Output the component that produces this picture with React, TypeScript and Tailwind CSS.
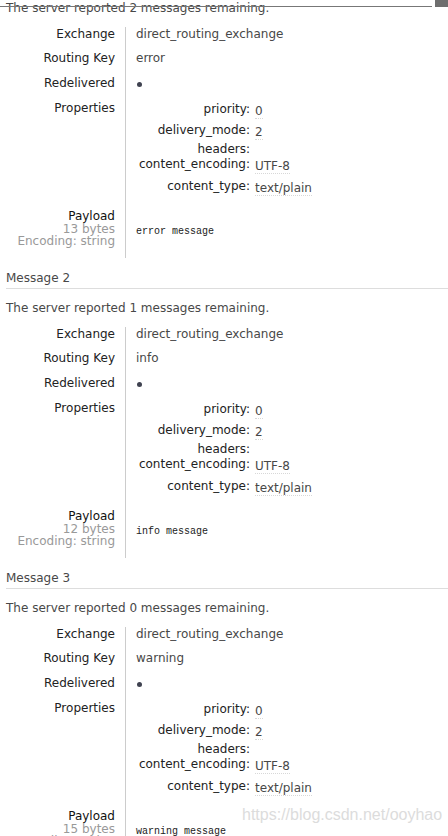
import React from "react";

type Msg = { n: number; remaining: number; key: string; bytes: number; payload: string };

const msgs: Msg[] = [
  { n: 1, remaining: 2, key: "error", bytes: 13, payload: "error message" },
  { n: 2, remaining: 1, key: "info", bytes: 12, payload: "info message" },
  { n: 3, remaining: 0, key: "warning", bytes: 15, payload: "warning message" },
];

function Row({ label, h, children }: { label: string; h: number; children: React.ReactNode }) {
  return (
    <div className="flex" style={{ height: h }}>
      <div className="w-[125px] shrink-0 pr-[10px] text-right text-[#222] leading-[14px]">{label}</div>
      <div className="border-l border-[#cccccc] pl-[10px] leading-[14px] text-[#484848]">{children}</div>
    </div>
  );
}

function Prop({ label, value, h }: { label: string; value?: string; h: number }) {
  return (
    <div className="flex" style={{ height: h }}>
      <div className="w-[114px] shrink-0 text-right text-[#222] leading-[14px]">{label}</div>
      <div className="pl-[5px]">
        {value ? (
          <span className="inline-block pt-[3px] leading-[13px] text-[#484848] border-b border-dotted border-[#d8d8d8]">
            {value}
          </span>
        ) : null}
      </div>
    </div>
  );
}

function Block({ m }: { m: Msg }) {
  return (
    <div className="mb-[10px]">
      <div className="ml-[6px] h-[21px] border-b border-[#dddddd] leading-[20px] text-[#484848]">
        Message {m.n}
      </div>
      <div className="mt-[9px] ml-[6px] leading-[20px] text-[#484848]">
        The server reported {m.remaining} messages remaining.
      </div>
      <div className="mt-[9px]">
        <Row label="Exchange" h={24}>direct_routing_exchange</Row>
        <Row label="Routing Key" h={25}>{m.key}</Row>
        <Row label="Redelivered" h={25}>
          <div className="mt-[6px] ml-[1px] w-[5px] h-[5px] rounded-full bg-[#3f4250]" />
        </Row>
        <div className="flex h-[107px]">
          <div className="w-[125px] shrink-0 pr-[10px] text-right text-[#222] leading-[14px]">Properties</div>
          <div className="border-l border-[#cccccc] pl-[10px] pt-[1px]">
            <Prop label="priority:" value="0" h={21} />
            <Prop label="delivery_mode:" value="2" h={19} />
            <Prop label="headers:" h={15} />
            <Prop label="content_encoding:" value="UTF-8" h={22} />
            <Prop label="content_type:" value="text/plain" h={22} />
          </div>
        </div>
        <div className="flex h-[50px]">
          <div className="w-[125px] shrink-0 pr-[10px] pt-[2px] text-right leading-[12.5px]">
            <div className="text-[#111]">Payload</div>
            <div className="text-[#999]">{m.bytes} bytes</div>
            <div className="text-[#999]">Encoding: string</div>
          </div>
          <div className="border-l border-[#cccccc] pl-[10px] pt-[18px]">
            <pre className="font-['Liberation_Mono',monospace] text-[10px] leading-[12px] text-[#222]">{m.payload}</pre>
          </div>
        </div>
      </div>
    </div>
  );
}

export default function App() {
  return (
    <div className="relative h-[836px] w-[448px] overflow-hidden bg-white font-['DejaVu_Sans',Verdana,sans-serif] text-[12px]">
      <div className="-mt-[32px]">
        {msgs.map((m) => (
          <Block key={m.n} m={m} />
        ))}
      </div>
      <div className="absolute left-0 top-[6px] h-[1px] w-[432px] bg-[#777]" />
      <div className="absolute left-[435px] top-0 h-[7px] w-[13px] bg-[#6e6e6e]" />
      <div className="absolute left-[242px] top-[805px] font-['Liberation_Sans',Arial,sans-serif] text-[16px] leading-[20px] text-[#dcdcdc]">
        https://blog.csdn.net/ooyhao
      </div>
    </div>
  );
}
